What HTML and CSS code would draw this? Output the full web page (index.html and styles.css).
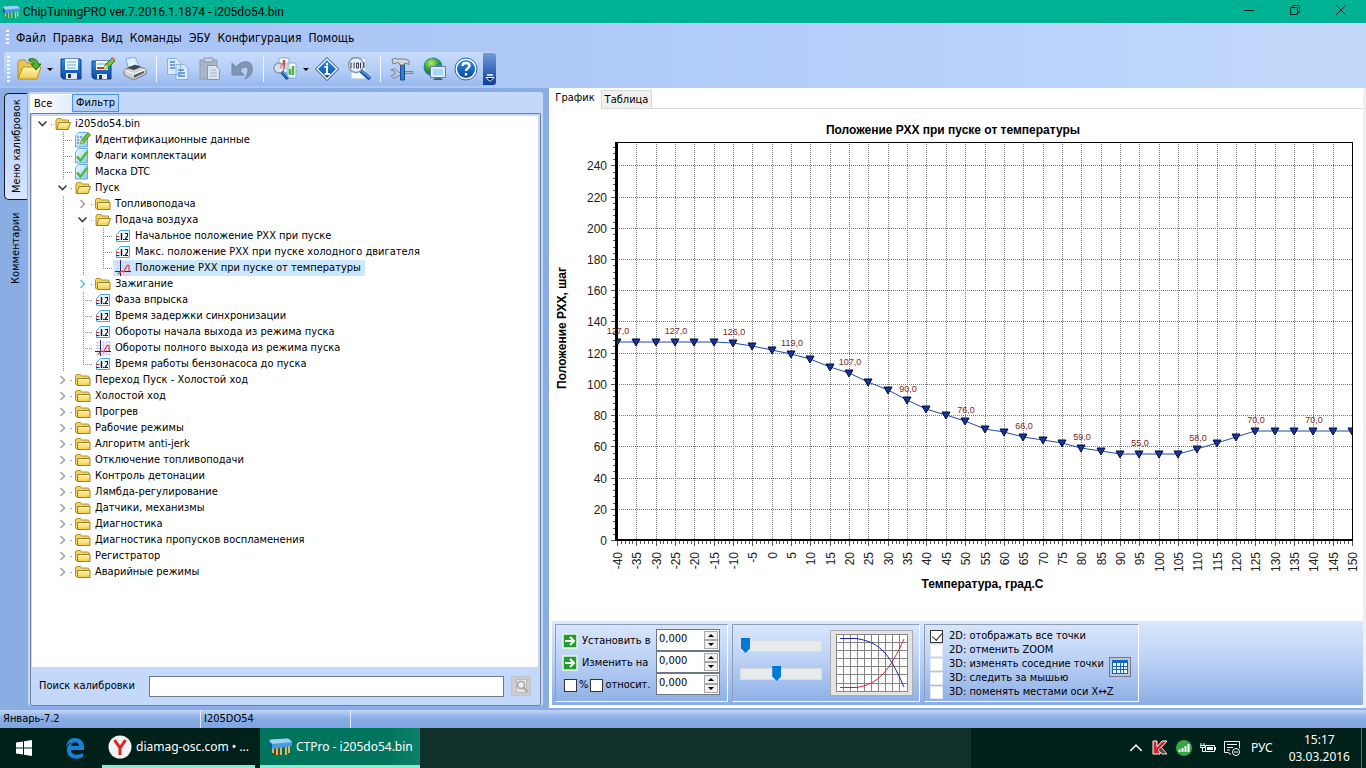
FILE: index.html
```html
<!DOCTYPE html>
<html lang="ru">
<head>
<meta charset="utf-8">
<title>ChipTuningPRO ver.7.2016.1.1874 - i205do54.bin</title>
<link rel="stylesheet" href="styles.css">
</head>
<body>
<svg class="defs" aria-hidden="true">
  <defs>
    <linearGradient id="gold" x1="0" y1="0" x2="0" y2="1"><stop offset="0" stop-color="#fff8b0"/><stop offset="1" stop-color="#f0cc50"/></linearGradient>
    <linearGradient id="sky" x1="0" y1="0" x2="1" y2="1"><stop offset="0" stop-color="#f4fbff"/><stop offset="1" stop-color="#8fc9f4"/></linearGradient>
    <linearGradient id="navy" x1="0" y1="0" x2="0" y2="1"><stop offset="0" stop-color="#2f8fe0"/><stop offset="1" stop-color="#0a47a0"/></linearGradient>
    <radialGradient id="leaf" cx=".4" cy=".3"><stop offset="0" stop-color="#b6f05c"/><stop offset="1" stop-color="#1f8a2c"/></radialGradient>
  </defs>
  <symbol id="folder" viewBox="0 0 16 16"><path d="M.5 12V4l1-1.500h4L6.500 4h7l.5.500V13H1.500z" fill="#f3d560" stroke="#b3922c"/><path d="M2.500 13.500v-7h12.500v7z" fill="url(#gold)" stroke="#a08020"/></symbol>
  <symbol id="folder-open" viewBox="0 0 16 16"><path d="M1 13V4l1-1.500h4l1 1.500h6.500V13z" fill="#f3d560" stroke="#b3922c"/><path d="M1.500 13.500L4 6.500h11.500L13 13.500z" fill="url(#gold)" stroke="#a08020"/></symbol>
  <symbol id="edit" viewBox="0 0 16 16"><path d="M.5 4l3-3.500h9v14.500H.5z" fill="url(#sky)" stroke="#62aee4"/><path d="M2.500 5h1M2.500 8h1M2.500 11h1M5.500 5h1" stroke="#234" stroke-width="1.500"/><path d="M5.500 12l1-4L13 .8l2.500 2L8.500 11z" fill="#6cc332" stroke="#3c7a1c" stroke-width=".8"/><path d="M5.500 12l1-4 2 3z" fill="#f1c45a"/></symbol>
  <symbol id="check" viewBox="0 0 16 16"><path d="M.5 4l3-3.500h9v14.500H.5z" fill="url(#sky)" stroke="#62aee4"/><path d="M2 8.500l3.500 4L12.500 3.500" fill="none" stroke="#4cbc3c" stroke-width="2.400"/></symbol>
  <symbol id="num" viewBox="0 0 16 16"><path d="M1.500 6.500l4-4h9v11h-13z" fill="#f2faff" stroke="#4aa6e2"/><path d="M1 8.500h3.500" stroke="#d33"/><path d="M1 11.500h3.500" stroke="#236"/><path d="M6.500 5v7" stroke="#012" stroke-width="1.400"/><path d="M8 11.500h1" stroke="#012"/><path d="M10 5.500h2.500v2.500L10 11.500h3" fill="none" stroke="#012" stroke-width="1.100"/></symbol>
  <symbol id="curve" viewBox="0 0 16 16"><path d="M1 2.500h15M1 5.500h15M1 8.500h15M1 14.500h15M2.500 1v15M8.500 1v15M11.500 1v15M14.500 1v15" stroke="#d6d0f6"/><path d="M5.500 0v16M0 11.500h16" stroke="#222a58"/><path d="M3 14l4-3 2 1 2-5 2-2 1 1v5" fill="none" stroke="#df3f43" stroke-width="1.200"/></symbol>
  <symbol id="down" viewBox="0 0 16 16"><path d="M3.500 5.500l4 4 4-4" fill="none" stroke="#404040" stroke-width="1.600"/></symbol>
  <symbol id="right" viewBox="0 0 16 16"><path d="M5.500 4l4 4-4 4" fill="none" stroke="currentColor" stroke-width="1.500"/></symbol>
  <symbol id="chip" viewBox="0 0 24 18"><path d="M5 7v8M9 8v9M13 9v8M18 8v9M21 7v8" stroke="#e8c35e" stroke-width="1.800"/><path d="M6.500 8v9M10.500 9v8M15 9v8" stroke="#593c22" stroke-width=".8"/><path d="M1 3l2-1.500 17-1L24 3v5l-20 3z" fill="#4a9ade"/><path d="M1 3l2-1.500 17-1L24 4 4 6z" fill="#9bd2f5"/><path d="M1 3l3 3v5L1 8z" fill="#185a91"/></symbol>
  <symbol id="go" viewBox="0 0 16 16"><path d="M1 1h14v14H1z" fill="#229c2c" stroke="#e8f7e4" stroke-width="1.500"/><path d="M3 8h9M8 4l4 4-4 4" fill="none" stroke="#fff" stroke-width="2"/></symbol>
</svg>

<header class="titlebar">
  <svg class="app-icon"><use href="#chip"/></svg>
  <h1 class="title">ChipTuningPRO ver.7.2016.1.1874 - i205do54.bin</h1>
  <button class="win-btn" aria-label="Свернуть"><svg viewBox="0 0 12 12"><path d="M1 6.500h10" stroke="#10201c"/></svg></button>
  <button class="win-btn" aria-label="Восстановить"><svg viewBox="0 0 12 12"><path d="M1.500 3.500h7v7h-7zM3.500 3V1.500h7v7H9" fill="none" stroke="#10201c"/></svg></button>
  <button class="win-btn" aria-label="Закрыть"><svg viewBox="0 0 12 12"><path d="M1 1l10 10M11 1L1 11" stroke="#10201c"/></svg></button>
</header>

<nav class="menubar">
  <span class="grip"></span>
  <button>Файл</button><button>Правка</button><button>Вид</button><button>Команды</button><button>ЭБУ</button><button>Конфигурация</button><button>Помощь</button>
</nav>

<div class="toolrow">
<div class="toolbar">
  <span class="grip"></span>
  <button aria-label="Открыть"><svg viewBox="0 0 24 24"><path d="M1 21V5l2-2h5l2 3h9v15z" fill="#ecc550" stroke="#b18c26"/><path d="M1 22L6 10h18l-4 12z" fill="url(#gold)" stroke="#b18c26"/><path d="M12 2c6-1 9 1 9 5h3l-5 6-5-6h3c0-2-2-3-5-3z" fill="#4fb530" stroke="#236d16"/></svg></button>
  <button class="arrow" aria-label="Список файлов"></button>
  <button aria-label="Сохранить"><svg viewBox="0 0 24 24"><path d="M2 2h19l1 1v19H4l-2-2z" fill="url(#navy)" stroke="#153f86"/><path d="M6 2h13v11H6z" fill="#f4f8ff"/><path d="M8 5h9M8 8h9M8 11h9" stroke="#5ba7df"/><path d="M7 16h11v6H7z" fill="#e2e8ef"/><path d="M9 17h3v4H9z" fill="#234"/></svg></button>
  <button aria-label="Сохранить как"><svg viewBox="0 0 24 24"><path d="M1 4h18l1 1v17H3l-2-2z" fill="url(#navy)" stroke="#153f86"/><path d="M5 4h12v9H5z" fill="#f4f8ff"/><path d="M6 7h9" stroke="#5ba7df"/><path d="M6 11h8" stroke="#d33920" stroke-width="2"/><path d="M6 17h10v5H6z" fill="#e2e8ef"/><path d="M8 18h3v4H8z" fill="#234"/><path d="M13 12l1-4 7-7 3 3-7 7z" fill="#72c63d" stroke="#33751a"/><path d="M13 12l1-4 3 3z" fill="#ffe9a5"/><path d="M20 1l2-1 2 2-1 2z" fill="#e66"/></svg></button>
  <button aria-label="Печать"><svg viewBox="0 0 24 24"><path d="M5 10L3 2 12 0l4 9z" fill="#dff0ff" stroke="#7fa8d1"/><path d="M1 13l11-5 11 4v5l-12 6L1 18z" fill="#d0d1d3" stroke="#77797f"/><path d="M1 13l10 4 12-5" fill="none" stroke="#fff"/><path d="M4 11l8-3 6 2-7 3z" fill="#3f454c"/><path d="M11 18l10-4v2l-10 5z" fill="#595d64"/></svg></button>
  <span class="sep"></span>
  <button aria-label="Копировать"><svg viewBox="0 0 24 24"><path d="M1.500 1.500h9l4 4v12h-13zM10 7.500h8l4 4v11H10z" fill="#d9ebfc" stroke="#87afdf"/><path d="M4 5h5M4 8h5M4 11h5M12 13h6M12 16h7M12 19h7" stroke="#4c8bcf" stroke-width="1.300"/></svg></button>
  <button aria-label="Вставить"><svg viewBox="0 0 24 24"><path d="M2 3h17v19H2z" fill="#a8b5c9" stroke="#8c9bb2"/><path d="M6 1h9v4H6z" fill="#c7d1e0" stroke="#8898b0"/><path d="M9.500 8.500h8l4 4v10h-12z" fill="#dae4f1" stroke="#8898b0"/><path d="M12 13h6M12 16h7M12 19h7" stroke="#a5b2c7"/></svg></button>
  <button aria-label="Отменить"><svg viewBox="0 0 24 24"><path d="M2 6v12h12l-4-4c3-5 8-5 8-1 0 4-1 6-3 9 6-3 8-7 7-12C21 3 12 3 6 10z" fill="#8196b7" stroke="#7184a4"/></svg></button>
  <span class="sep"></span>
  <button aria-label="Сравнение"><svg viewBox="0 0 24 24"><path d="M6 1h10v15H6zM14 6h9v15h-9z" fill="#f6faff" stroke="#8eabc9"/><path d="M8 12V6M11 12V3" stroke="#d7483d" stroke-width="2.500"/><path d="M17 18v-6M20 18v-9" stroke="#4bb740" stroke-width="2.500"/><circle cx="6" cy="11" r="5" fill="#eef5fc" fill-opacity=".55" stroke="#899bb4" stroke-width="1.500"/><path d="M9 15l6 7" stroke="#1e5fae" stroke-width="4"/><path d="M10 15l6 6" stroke="#8fc5f0"/></svg></button>
  <button class="arrow" aria-label="Варианты сравнения"></button>
  <button aria-label="Информация"><svg viewBox="0 0 24 24"><path d="M12 .5L23.500 12 12 23.500.5 12z" fill="#fff" stroke="#153f86"/><path d="M12 3l9 9-9 9-9-9z" fill="url(#navy)"/><path d="M12 6v2.500M9.500 10H12v7M9.500 17h5.500" fill="none" stroke="#fff" stroke-width="2"/></svg></button>
  <button aria-label="Поиск"><svg viewBox="0 0 24 24"><path d="M4 1h15v21H4z" fill="#f2f7fd" stroke="#a8bfd8"/><circle cx="9" cy="8" r="7.500" fill="#e5f0fa" stroke="#8292a8" stroke-width="1.300"/><path d="M4 5.500v6M7 5.500v6M13.500 5.500v6M9.500 6h2v5h-2zM17 5v6" fill="none" stroke="#334"/><path d="M14 14l9 8" stroke="#1a57a7" stroke-width="4"/><path d="M15 14l8 7" stroke="#8fc5f0"/></svg></button>
  <span class="sep"></span>
  <button aria-label="Настройка"><svg viewBox="0 0 24 24"><path d="M14 14.500h9v2h-9z" fill="#b9c0ca" stroke="#6b7686" stroke-width=".8"/><path d="M1 13l4 1.500v3L1 19l3 2.500 5-3h3v-3H9l-4-4z" fill="#c3cad4" stroke="#6b7686" stroke-width=".8"/><path d="M10.500 7h4v16h-4z" fill="#317fcb" stroke="#174c8c"/><path d="M2 2.500l3-1L8 2h7l4 1.500v4L15 6l-1 2h-4L9 6l-2-.5L3 7z" fill="#d4d8de" stroke="#5d6775" stroke-width=".8"/></svg></button>
  <button aria-label="Сеть"><svg viewBox="0 0 24 24"><circle cx="11" cy="10" r="9.500" fill="#2681cf"/><path d="M3 5l6-4 9 3 2 4-5-1-3 4-5 1 2 6-5-3-2-6z" fill="url(#leaf)"/><path d="M8.500 9.500h15v11h-15z" fill="#d8edfb" stroke="#657f9d"/><path d="M11 12h10v6H11z" fill="#a9d6f4"/><path d="M13 21h6l2 2H11z" fill="#4d5c6d"/></svg></button>
  <button aria-label="Справка"><svg viewBox="0 0 24 24"><circle cx="12" cy="12" r="11" fill="#fff" stroke="#285ea9"/><circle cx="12" cy="12" r="9" fill="url(#navy)"/><path d="M8.500 9c0-4 7-4 7 0 0 2-3.500 2.500-3.500 5M12 16v2.500" fill="none" stroke="#fff" stroke-width="2.300"/></svg></button>
  <button class="overflow" aria-label="Ещё"><svg viewBox="0 0 10 8"><path d="M2 1h6" stroke="#fff" stroke-width="1.500"/><path d="M1 3.500h8L5 7.500z" stroke="#fff" fill="#071a40"/></svg></button>
</div>
</div>

<main class="workspace">
  <div class="side-tabs">
    <button class="side-tab active">Меню калибровок</button>
    <button class="side-tab">Комментарии</button>
  </div>

  <section class="left-panel">
    <div class="tabs">
      <button class="tab active">Все</button><button class="tab">Фильтр</button>
    </div>
    <div class="frame">
      <ul class="tree">
        <li><div class="row"><button class="tog" aria-label="Свернуть ветвь"><svg><use href="#down"/></svg></button><span class="node"><svg><use href="#folder-open"/></svg>i205do54.bin</span></div>
        <ul>
          <li><div class="row"><span class="node"><svg><use href="#edit"/></svg>Идентификационные данные</span></div></li>
          <li><div class="row"><span class="node"><svg><use href="#check"/></svg>Флаги комплектации</span></div></li>
          <li><div class="row"><span class="node"><svg><use href="#check"/></svg>Маска DTC</span></div></li>
          <li><div class="row"><button class="tog" aria-label="Свернуть ветвь"><svg><use href="#down"/></svg></button><span class="node"><svg><use href="#folder-open"/></svg>Пуск</span></div>
          <ul>
            <li><div class="row"><button class="tog" aria-label="Развернуть ветвь"><svg><use href="#right"/></svg></button><span class="node"><svg><use href="#folder"/></svg>Топливоподача</span></div></li>
            <li><div class="row"><button class="tog" aria-label="Свернуть ветвь"><svg><use href="#down"/></svg></button><span class="node"><svg><use href="#folder-open"/></svg>Подача воздуха</span></div>
            <ul>
              <li><div class="row"><span class="node"><svg><use href="#num"/></svg>Начальное положение РХХ при пуске</span></div></li>
              <li><div class="row"><span class="node"><svg><use href="#num"/></svg>Макс. положение РХХ при пуске холодного двигателя</span></div></li>
              <li><div class="row"><span class="node selected"><svg><use href="#curve"/></svg>Положение РХХ при пуске от температуры</span></div></li>
            </ul></li>
            <li><div class="row"><button class="tog hover" aria-label="Развернуть ветвь"><svg><use href="#right"/></svg></button><span class="node"><svg><use href="#folder"/></svg>Зажигание</span></div></li>
            <li><div class="row"><span class="node"><svg><use href="#num"/></svg>Фаза впрыска</span></div></li>
            <li><div class="row"><span class="node"><svg><use href="#num"/></svg>Время задержки синхронизации</span></div></li>
            <li><div class="row"><span class="node"><svg><use href="#num"/></svg>Обороты начала выхода из режима пуска</span></div></li>
            <li><div class="row"><span class="node"><svg><use href="#curve"/></svg>Обороты полного выхода из режима пуска</span></div></li>
            <li><div class="row"><span class="node"><svg><use href="#num"/></svg>Время работы бензонасоса до пуска</span></div></li>
          </ul></li>
          <li><div class="row"><button class="tog" aria-label="Развернуть ветвь"><svg><use href="#right"/></svg></button><span class="node"><svg><use href="#folder"/></svg>Переход Пуск - Холостой ход</span></div></li>
          <li><div class="row"><button class="tog" aria-label="Развернуть ветвь"><svg><use href="#right"/></svg></button><span class="node"><svg><use href="#folder"/></svg>Холостой ход</span></div></li>
          <li><div class="row"><button class="tog" aria-label="Развернуть ветвь"><svg><use href="#right"/></svg></button><span class="node"><svg><use href="#folder"/></svg>Прогрев</span></div></li>
          <li><div class="row"><button class="tog" aria-label="Развернуть ветвь"><svg><use href="#right"/></svg></button><span class="node"><svg><use href="#folder"/></svg>Рабочие режимы</span></div></li>
          <li><div class="row"><button class="tog" aria-label="Развернуть ветвь"><svg><use href="#right"/></svg></button><span class="node"><svg><use href="#folder"/></svg>Алгоритм anti-jerk</span></div></li>
          <li><div class="row"><button class="tog" aria-label="Развернуть ветвь"><svg><use href="#right"/></svg></button><span class="node"><svg><use href="#folder"/></svg>Отключение топливоподачи</span></div></li>
          <li><div class="row"><button class="tog" aria-label="Развернуть ветвь"><svg><use href="#right"/></svg></button><span class="node"><svg><use href="#folder"/></svg>Контроль детонации</span></div></li>
          <li><div class="row"><button class="tog" aria-label="Развернуть ветвь"><svg><use href="#right"/></svg></button><span class="node"><svg><use href="#folder"/></svg>Лямбда-регулирование</span></div></li>
          <li><div class="row"><button class="tog" aria-label="Развернуть ветвь"><svg><use href="#right"/></svg></button><span class="node"><svg><use href="#folder"/></svg>Датчики, механизмы</span></div></li>
          <li><div class="row"><button class="tog" aria-label="Развернуть ветвь"><svg><use href="#right"/></svg></button><span class="node"><svg><use href="#folder"/></svg>Диагностика</span></div></li>
          <li><div class="row"><button class="tog" aria-label="Развернуть ветвь"><svg><use href="#right"/></svg></button><span class="node"><svg><use href="#folder"/></svg>Диагностика пропусков воспламенения</span></div></li>
          <li><div class="row"><button class="tog" aria-label="Развернуть ветвь"><svg><use href="#right"/></svg></button><span class="node"><svg><use href="#folder"/></svg>Регистратор</span></div></li>
          <li><div class="row"><button class="tog" aria-label="Развернуть ветвь"><svg><use href="#right"/></svg></button><span class="node"><svg><use href="#folder"/></svg>Аварийные режимы</span></div></li>
        </ul></li>
      </ul>
      <div class="search">
        <label for="q">Поиск калибровки</label>
        <input id="q" type="text">
        <button aria-label="Найти"><svg viewBox="0 0 16 16"><path d="M3.500 1.500h10v13h-10z" fill="#e4e4e4" stroke="#bbb"/><circle cx="8" cy="7" r="3.500" fill="#eee" stroke="#a5a5a5" stroke-width="1.500"/><path d="M10.500 9.500l4 4.500" stroke="#a5a5a5" stroke-width="2"/></svg></button>
      </div>
    </div>
  </section>

  <section class="right-panel">
    <div class="view-tabs">
      <button class="view-tab active">График</button><button class="view-tab">Таблица</button>
    </div>
    <div class="chart" id="chart"></div>
    <div class="controls">
      <div class="group setters">
        <div class="setter"><button class="go" aria-label="Установить"><svg><use href="#go"/></svg></button><label for="v1">Установить в</label></div>
        <div class="spin"><input id="v1" type="text" value="0,000"><button aria-label="Больше"></button><button aria-label="Меньше"></button></div>
        <div class="setter"><button class="go" aria-label="Изменить"><svg><use href="#go"/></svg></button><label for="v2">Изменить на</label></div>
        <div class="spin"><input id="v2" type="text" value="0,000"><button aria-label="Больше"></button><button aria-label="Меньше"></button></div>
        <div class="setter checks"><input class="box dark" type="checkbox" id="pc"><label for="pc">%</label><input class="box dark" type="checkbox" id="rel"><label for="rel">относит.</label></div>
        <div class="spin"><input aria-label="Относительное значение" type="text" value="0,000"><button aria-label="Больше"></button><button aria-label="Меньше"></button></div>
      </div>
      <div class="group shape">
        <div class="sliders">
          <input type="range" min="0" max="100" value="0" aria-label="Начало">
          <input type="range" min="0" max="100" value="44" aria-label="Наклон">
        </div>
        <button class="preview" aria-label="Кривая"><svg viewBox="0 0 72 58"><path d="M.5.5h71v57H.5zM7.500 0v58M14.500 0v58M21.500 0v58M28.500 0v58M35.500 0v58M42.500 0v58M49.500 0v58M56.500 0v58M63.500 0v58M0 8.500h72M0 16.500h72M0 24.500h72M0 32.500h72M0 40.500h72M0 49.500h72" fill="none" stroke="#858585" shape-rendering="crispEdges"/><path d="M4 4.500h16C42 8 52 16 68 53" fill="none" stroke="#2222ae"/><path d="M4 53.500h16C42 51 54 36 68 5" fill="none" stroke="#cf2430"/></svg></button>
      </div>
      <div class="group options">
        <div class="option-list">
          <label><input class="box dark" type="checkbox" checked>2D: отображать все точки</label>
          <label><input class="box" type="checkbox">2D: отменить ZOOM</label>
          <label><input class="box" type="checkbox">3D: изменять соседние точки</label>
          <label><input class="box" type="checkbox">3D: следить за мышью</label>
          <label><input class="box" type="checkbox">3D: поменять местами оси X↔Z</label>
        </div>
        <button class="grid-btn" aria-label="Сетка"><svg viewBox="0 0 16 14"><path d="M0 0h16v14H0z" fill="#1567b5"/><path d="M1 3h3v3H1zM5 3h3v3H5zM9 3h2v3H9zM12 3h3v3h-3zM1 7h3v2H1zM5 7h3v2H5zM9 7h2v2H9zM12 7h3v2h-3zM1 10h3v3H1zM5 10h3v3H5zM9 10h2v3H9zM12 10h3v3h-3z" fill="#e9f4ff"/></svg></button>
      </div>
    </div>
  </section>
</main>

<footer class="statusbar"><span>Январь-7.2</span><span>I205DO54</span><span></span></footer>

<div class="taskbar">
  <button class="task-icon start" aria-label="Пуск"><svg viewBox="0 0 16 16"><path d="M0 2.500l7-1v6H0zM8 1.300L16 0v7.500H8zM0 8.500h7v6l-7-1zM8 8.500h8V16l-8-1.200z" fill="#fff"/></svg></button>
  <button class="task-icon edge" aria-label="Edge"><svg viewBox="0 0 20 22"><path d="M1 10C2 3 6 1 10 1c6 0 9 4 9 9v3H6c0 5 7 6 12 3v4c-7 4-16 1-16-7 0-4 2-6 5-7-3 0-5 2-6 4zm5-1h8c0-5-7-5-8 0z" fill="#1681d7"/></svg></button>
  <button class="task"><svg viewBox="0 0 24 24"><circle cx="12" cy="12" r="11.500" fill="#f4f4f4"/><path d="M6.500 5l5.500 8v7M17.500 5L12 13" fill="none" stroke="#dc2626" stroke-width="3"/></svg>diamag-osc.com • ...</button>
  <button class="task active"><svg class="chip-lg"><use href="#chip"/></svg>CTPro - i205do54.bin</button>
  <div class="band"></div>
  <div class="tray">
    <svg viewBox="0 0 14 14"><path d="M2 9.500l5-5 5 5" fill="none" stroke="#eee" stroke-width="1.300"/></svg>
    <svg viewBox="0 0 16 16"><path d="M1 1h4v6l5-6h5L8 9v5H1z" fill="#d8242c" stroke="#fff"/><path d="M9 7l6 7h-5l-4-4z" fill="#76403a" stroke="#ddd"/></svg>
    <svg viewBox="0 0 16 16"><circle cx="8" cy="8" r="8" fill="#36a544"/><path d="M3.500 12V9.500M6.500 12V8M9.500 12V6M12.500 12V4" stroke="#fff" stroke-width="2"/></svg>
    <svg viewBox="0 0 16 16"><path d="M5.500 5.500h9v6h-9zM15.500 7v3" fill="none" stroke="#fff"/><path d="M7 7h6v3H7z" fill="#fff"/><path d="M1 3v2M4 3v2M0 5.500h5v2H0zM2.500 8v3.500H5" stroke="#fff" fill="none"/></svg>
    <svg viewBox="0 0 16 16"><path d="M7 14.500L4 12.500H.5V1.500h15v7M3 4.500h10M3 7.500h6M3 10h3" fill="none" stroke="#fff"/><circle cx="12" cy="12" r="3.500" fill="#00211a" stroke="#fff"/><path d="M10 12h4" stroke="#fff"/></svg>
    <span class="lang">РУС</span>
    <div class="clock"><span>15:17</span><span>03.03.2016</span></div>
  </div>
  <button class="desktop" aria-label="Рабочий стол"></button>
</div>
<script src="chart.js"></script>
</body>
</html>
```
FILE: styles.css
```css
* { box-sizing: border-box; }
html, body { height: 100%; }
body { margin: 0; display: flex; flex-direction: column; overflow: hidden; background: #8aade3; color: #000; font: 11px/16px "DejaVu Sans Condensed", Tahoma, "Noto Sans", sans-serif; }
button { margin: 0; padding: 0; border: 0; background: none; font: inherit; color: inherit; }
svg { display: block; flex: none; }
.defs { position: absolute; width: 0; height: 0; }

.titlebar { display: flex; align-items: center; height: 23px; flex: none; background: #00b294; }
.app-icon { width: 18px; height: 14px; margin: 0 3px 0 2px; }
.title { flex: 1; margin: 0; font: 12px/20px Roboto, "Noto Sans", sans-serif; }
.win-btn { width: 46px; display: flex; justify-content: center; align-self: stretch; padding: 4px 4px 0 0; }
.win-btn svg { width: 12px; height: 12px; }

.menubar { display: flex; align-items: center; flex: none; height: 29px; padding-left: 6px; background: linear-gradient(90deg, #a5c0f3, #b9d2fb 75%, #c4d9fa); }
.menubar button { margin-right: 7px; font-size: 12px; white-space: nowrap; }
.grip { width: 3px; height: 16px; margin-right: 7px; background: repeating-linear-gradient(#f5f9ff 0 2px, transparent 2px 4px); }

.toolrow { flex: none; height: 36px; background: linear-gradient(90deg, #a5c0f3, #b9d2fb 75%, #c4d9fa); }
.toolbar { display: flex; align-items: center; width: max-content; height: 34px; padding-left: 6px; margin-left: 4px; border-radius: 4px; background: linear-gradient(#c8dcfb, #b6cff7 50%, #98b9ee); }
.toolrow .grip { height: 26px; margin: 0 3px 0 -3px; }
.toolbar button { width: 32px; height: 32px; display: flex; align-items: center; justify-content: center; }
.toolbar svg { width: 24px; height: 24px; }
.toolbar .arrow { width: 10px; }
.arrow::before { content: ""; border: 3px solid transparent; border-top-color: #000; border-bottom: 0; }
.sep { width: 1px; height: 26px; margin: 0 5px; background: #f0f6ff; }
.toolbar .overflow { width: 13px; height: 32px; margin-left: 1px; align-items: flex-end; padding-bottom: 3px; background: linear-gradient(#6f9bdd, #0c3f9c); border-radius: 0 3px 3px 0; }
.toolbar .overflow svg { width: 10px; height: 8px; }

.workspace { flex: 1; min-height: 0; display: flex; }
.side-tabs { flex: none; width: 28px; padding: 5px 1px 0 4px; display: flex; flex-direction: column; gap: 8px; }
.side-tab { writing-mode: vertical-rl; transform: rotate(180deg); padding: 4px; height: 80px; width: 23px; white-space: nowrap; text-align: center; }
.side-tab.active { height: 107px; background: linear-gradient(0deg, #adc8f6, #d8e6fd); border: 1px solid #111a30; border-left: 0; border-radius: 0 5px 5px 0; }

.left-panel { flex: 511 1 0; min-width: 0; margin: 3px 5px 3px 0; padding: 2px 2px 0 2px; display: flex; flex-direction: column; border: 1px solid #8badea; border-left: 0; border-radius: 4px; background: #c3d8fa; }
.tabs { display: flex; height: 19px; flex: none; }
.tab { height: 18px; width: 47px; border: 1px solid #4c92de; background: linear-gradient(#c0d8fb, #b0ccf6); }
.tab.active { height: 19px; width: 42px; padding-left: 3px; text-align: left; border-right: 0; border-color: #f8fbff; border-bottom: 0; background: linear-gradient(90deg, #fff, #e3edfd); }
.frame { flex: 1; min-height: 0; display: flex; flex-direction: column; padding: 2px 2px 0 1px; border: 1px solid #737f92; border-radius: 0 0 2px 2px; }
.tree, .tree ul { list-style: none; margin: 0; padding: 0; }
.tree { flex: 1; min-height: 0; overflow: hidden; padding-left: 3px; background: #fff; }
.tree ul { padding-left: 20px; }
.tree li { position: relative; }
.tree ul > li::before { content: ""; position: absolute; left: 8px; top: 0; bottom: 0; width: 1px; background: repeating-linear-gradient(#888 0 1px, transparent 1px 2px); }
.tree ul > li:last-child::before { bottom: auto; height: 8px; }
.row { position: relative; display: flex; height: 16px; padding-left: 18px; white-space: nowrap; }
.row::before { content: ""; position: absolute; left: 8px; top: 8px; width: 10px; height: 1px; background: repeating-linear-gradient(90deg, #888 0 1px, transparent 1px 2px); }
.tog { position: relative; flex: none; width: 16px; height: 16px; margin-left: -18px; margin-right: 2px; background: #fff; color: #a0a0a0; }
.tog.hover { color: #4cc4f0; }
.tog svg, .node svg { width: 16px; height: 16px; }
.node { display: flex; padding: 0 4px 0 2px; gap: 4px; }
.node.selected { background: #cce8ff; }
.search { flex: none; display: flex; align-items: center; height: 38px; padding: 0 7px; }
.search label { width: 110px; white-space: nowrap; }
.search input { flex: 1; min-width: 0; height: 21px; border: 1px solid #6f7a89; background: #fff; font: inherit; }
.search button { width: 20px; height: 20px; margin-left: 7px; background: #ccc; border: 1px solid #bfc5cd; display: grid; place-items: center; }
.search button svg { width: 16px; height: 16px; }

.right-panel { flex: 814 1 0; min-width: 0; margin-bottom: 2px; display: flex; flex-direction: column; background: #fff; border-right: 3px solid #f0f0f0; }
.view-tabs { flex: none; display: flex; align-items: flex-end; height: 21px; border-bottom: 1px solid #d9d9d9; }
.view-tab { height: 18px; width: 51px; background: #f0f0f0; border: 1px solid #d9d9d9; border-bottom: 0; }
.view-tab.active { height: 20px; margin-bottom: -1px; width: 52px; padding-bottom: 3px; background: #fff; border: 0; }
.chart { flex: 1; min-height: 0; overflow: hidden; }
.chart text { font-family: "Liberation Sans", Arial, sans-serif; font-size: 12px; fill: #222; }
.chart .heading { font-weight: bold; fill: #000; text-anchor: middle; }
.chart .val { font-size: 9px; fill: #782828; text-anchor: middle; }
.chart .end { text-anchor: end; }
.controls { flex: none; display: flex; gap: 4px; height: 84px; margin: 0 0 3px 3px; padding: 3px; background: linear-gradient(#dbe8fc, #bcd2f6 45%, #8bade5); }
.group { border: 1px solid #8e9cb4; border-right-color: #fff; border-bottom-color: #fff; }
.setters { width: 173px; display: grid; grid-template-columns: 1fr 64px; grid-template-rows: 22px 22px 22px; padding: 4px 7px 0 6px; align-items: center; }
.setter { display: flex; align-items: center; gap: 4px; padding-top: 2px; white-space: nowrap; }
.go svg { width: 16px; height: 16px; }
.checks { gap: 2px; padding-left: 2px; }
.spin { display: grid; grid-template: 1fr 1fr / 1fr 14px; height: 22px; padding: 1px; border: 1px solid #6f7782; background: #fff; }
.spin input { grid-row: 1 / 3; min-width: 0; width: 100%; border: 0; padding: 0 0 2px 1px; font: inherit; background: none; }
.spin button { display: grid; place-items: center; background: #f0f0f0; border: 1px solid #a8a8a8; }
.spin button::before { content: ""; border: 3px solid transparent; border-bottom-color: #000; border-top: 0; }
.spin button:last-child::before { border: 3px solid transparent; border-top-color: #000; border-bottom: 0; }
.box { appearance: none; flex: none; width: 13px; height: 13px; margin: 0; background: #fff; border: 1px solid #e0e8f4; }
.box.dark { border-color: #333; }
.box:checked::before { content: ""; display: block; width: 5px; height: 8px; margin: 0 0 0 3px; border: solid #333; border-width: 0 1px 1px 0; transform: rotate(40deg); }
.shape { width: 188px; display: flex; justify-content: space-between; padding: 5px 6px 5px 7px; }
.sliders { display: flex; flex-direction: column; gap: 12px; padding-top: 8px; }
.sliders input { appearance: none; width: 82px; height: 16px; margin: 0; background: none; }
.sliders input::-webkit-slider-runnable-track { height: 12px; background: #e7eaea; border: 1px solid #d6dce4; }
.sliders input::-webkit-slider-thumb { appearance: none; width: 9px; height: 15px; margin-top: -3px; background: #0078d7; clip-path: polygon(0 0, 100% 0, 100% 70%, 50% 100%, 0 70%); }
.preview { width: 83px; display: grid; place-items: center; background: #e3e4e3; border: 1px solid #a9adb2; }
.preview svg { width: 72px; height: 58px; background: #fff; }
.options { width: 215px; display: flex; padding: 4px 5px; }
.option-list { flex: 1; display: flex; flex-direction: column; }
.option-list label { display: flex; align-items: center; gap: 6px; height: 14px; line-height: 14px; white-space: nowrap; }
.grid-btn { width: 22px; height: 20px; margin: 28px 2px 0 -24px; display: grid; place-items: center; background: #bac8dd; border: 1px solid #778; }
.grid-btn svg { width: 16px; height: 14px; }

.statusbar { flex: none; display: flex; height: 18px; line-height: 18px; background: linear-gradient(#c0d5fa, #8aaee6 45%, #7fa4df); }
.statusbar span { width: 150px; padding-left: 3px; border-right: 1px solid #dce9ff; }
.statusbar span:first-child { width: 201px; }
.statusbar span:last-child { flex: 1; border: 0; }

.taskbar { flex: none; display: flex; height: 40px; background: #00211a; color: #fff; font: 12px/18px "Noto Sans", sans-serif; }
.task-icon { width: 48px; display: grid; place-items: center; }
.start svg { width: 16px; height: 16px; }
.edge svg { width: 20px; height: 22px; }
.task-icon.edge { width: 54px; }
.task { display: flex; align-items: center; gap: 4px; width: 153px; padding: 0 6px; border-bottom: 3px solid #8bead0; white-space: nowrap; }
.task svg { width: 24px; height: 24px; }
.task svg.chip-lg { width: 24px; height: 18px; }
.task.active { width: 160px; margin-left: 5px; padding-left: 8px; background: linear-gradient(90deg, #00755e 80%, #0f8069); }
.band { flex: 0 1 551px; background: #10302a; }
.tray { margin-left: auto; display: flex; align-items: center; gap: 8px; }
.tray svg { width: 16px; height: 16px; }
.lang { margin: 0 8px 0 3px; }
.clock { display: flex; flex-direction: column; align-items: center; line-height: 17px; }
.desktop { width: 5px; margin-left: 11px; border-left: 1px solid #53736c; }
```
FILE: chart.js
```javascript
const values = [127,127,127,127,127,127,126,124,122,119,116,111,107,101,96,90,84,80,76,71,69,66,64,62,59,57,55,55,55,55,58,62,66,70,70,70,70,70,70];
const host = document.getElementById('chart');

function draw() {
  const w = host.clientWidth, h = host.clientHeight;
  const left = 68, right = w - 11, top = 33, bottom = h - 81;
  const px = t => Math.round(left + (t + 40) / 190 * (right - left));
  const py = v => Math.round(bottom - v / 255 * (bottom - top));
  let grid = '', ticks = '', text = '', marks = '';
  for (let t = -40; t <= 150; t++) {
    const x = px(t) + 0.5, major = t % 5 === 0;
    ticks += `M${x} ${bottom}v${major ? 6 : 4}`;
    if (major) {
      if (t > -40 && t < 150) grid += `M${x} ${top}V${bottom}`;
      text += `<text class="end" transform="translate(${px(t) + 5} ${bottom + 12}) rotate(-90)">${t}</text>`;
    }
  }
  for (let v = 0; v <= 252; v += 4) {
    const y = py(v) + 0.5, major = v % 20 === 0;
    ticks += `M${left} ${y}h${major ? -6 : -4}`;
    if (major) {
      if (v) grid += `M${left} ${y}H${right}`;
      text += `<text class="end" x="${left - 10}" y="${py(v) + 5}">${v}</text>`;
    }
  }
  const pts = values.map((v, i) => [px(-40 + i * 5), py(v)]);
  pts.forEach(([x, y], i) => {
    marks += `<path d="M${x - 4} ${y - 3}h8l-4 7z" fill="#1733a0" stroke="#000c38"/>`;
    if (i % 3 === 0 && i < 37) text += `<text class="val" x="${x + 1}" y="${y - 8}">${values[i].toFixed(1).replace('.', ',')}</text>`;
  });
  host.innerHTML = `<svg width="${w}" height="${h}">
    <defs><clipPath id="plot"><rect x="${left}" y="${top}" width="${right - left}" height="${bottom - top}"/></clipPath></defs>
    <g shape-rendering="crispEdges" fill="none">
      <path d="${grid}" stroke="#777" stroke-dasharray="1 1"/>
      <path d="${ticks}" stroke="#555"/>
      <path d="M${left} ${top + 0.5}H${right + 0.5}V${bottom}" stroke="#000"/>
      <path d="M${left - 0.5} ${top}V${bottom + 1}" stroke="#000" stroke-width="3"/>
      <path d="M${left - 1} ${bottom}H${right + 1}" stroke="#000" stroke-width="2"/>
    </g>
    <g clip-path="url(#plot)"><polyline points="${pts.join(' ')}" fill="none" stroke="#1f4fa0"/>${marks}</g>
    ${text}
    <text class="heading" x="${w / 2 - 3}" y="25">Положение РХХ при пуске от температуры</text>
    <text class="heading" x="${(left + right) / 2 - 2}" y="${h - 33}">Температура, град.С</text>
    <text class="heading" transform="translate(17 ${(top + bottom) / 2 - 13}) rotate(-90)">Положение РХХ, шаг</text>
  </svg>`;
}
draw();
window.addEventListener('resize', draw);
```
